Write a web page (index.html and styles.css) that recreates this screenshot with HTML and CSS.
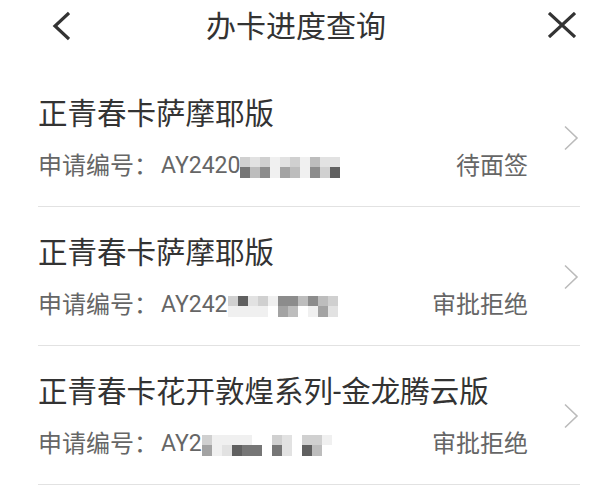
FILE: index.html
```html
<!DOCTYPE html>
<html>

<head>
  <meta charset="utf-8" />
  <title>办卡进度查询</title>
  <link rel="stylesheet" href="styles.css">
</head>

<body>
  <div class="header">
    <svg class="back" width="18" height="30" viewBox="0 0 18 30">
      <path d="M17 2 L3 15 L17 28" />
    </svg>
    <h1 class="title">办卡进度查询</h1>
    <svg class="close" width="28" height="26" viewBox="0 0 28 26">
      <path d="M1 1 L27 25 M27 1 L1 25" />
    </svg>
  </div>

  <div class="list">
    <div class="row">
      <div class="info">
        <p class="card-name">正青春卡萨摩耶版</p>
        <div class="sub">
          <div class="apply-no">
            <span>申请编号：</span><span class="latin">AY2420</span>
            <div class="mosaic">
              <i class="s3"></i><i class="s7"></i>
              <i class="s2"></i><i class="s4"></i>
              <i class="s3"></i><i class="s6"></i>
              <i class="s1"></i><i class="s1"></i>
              <i class="s2"></i><i class="s5"></i>
              <i class="s3"></i><i class="s4"></i>
              <i class="s1"></i><i class="s1"></i>
              <i class="s4"></i><i class="s6"></i>
              <i class="s2"></i><i class="s3"></i>
              <i class="s2"></i><i class="s8"></i>
            </div>
          </div>
          <span class="status">待面签</span>
        </div>
      </div>
      <svg class="arrow" width="16" height="26" viewBox="0 0 16 26">
        <path d="M2 1.5 L14 13 L2 24.5" />
      </svg>
    </div>

    <div class="row">
      <div class="info">
        <p class="card-name">正青春卡萨摩耶版</p>
        <div class="sub">
          <div class="apply-no">
            <span>申请编号：</span><span class="latin">AY242</span>
            <div class="mosaic">
              <i class="s3"></i><i class="s1"></i>
              <i class="s8"></i><i class="s1"></i>
              <i class="s2"></i><i class="s1"></i>
              <i class="s3"></i><i class="s1"></i>
              <i class="s1"></i><i class="s0"></i>
              <i class="s6"></i><i class="s5"></i>
              <i class="s6"></i><i class="s4"></i>
              <i class="s4"></i><i class="s0"></i>
              <i class="s6"></i><i class="s1"></i>
              <i class="s4"></i><i class="s5"></i>
              <i class="s3"></i><i class="s2"></i>
            </div>
          </div>
          <span class="status">审批拒绝</span>
        </div>
      </div>
      <svg class="arrow" width="16" height="26" viewBox="0 0 16 26">
        <path d="M2 1.5 L14 13 L2 24.5" />
      </svg>
    </div>

    <div class="row">
      <div class="info">
        <p class="card-name">正青春卡花开敦煌系列-金龙腾云版</p>
        <div class="sub">
          <div class="apply-no">
            <span>申请编号：</span><span class="latin">AY2</span>
            <div class="mosaic">
              <i class="s3"></i><i class="s5"></i>
              <i class="s1"></i><i class="s1"></i>
              <i class="s1"></i><i class="s2"></i>
              <i class="s1"></i><i class="s8"></i>
              <i class="s1"></i><i class="s7"></i>
              <i class="s0"></i><i class="s7"></i>
              <i class="s0"></i><i class="s0"></i>
              <i class="s3"></i><i class="s7"></i>
              <i class="s2"></i><i class="s2"></i>
              <i class="s0"></i><i class="s0"></i>
              <i class="s3"></i><i class="s8"></i>
              <i class="s3"></i><i class="s4"></i>
              <i class="s1"></i><i class="s0"></i>
            </div>
          </div>
          <span class="status">审批拒绝</span>
        </div>
      </div>
      <svg class="arrow" width="16" height="26" viewBox="0 0 16 26">
        <path d="M2 1.5 L14 13 L2 24.5" />
      </svg>
    </div>
  </div>
</body>

</html>
```

FILE: styles.css
```css
* {
  margin: 0;
  padding: 0;
  box-sizing: border-box;
  font-family: Roboto, "Noto Sans CJK SC", sans-serif;
}

html,
body {
  width: 100%;
  height: 100%;
  overflow: hidden;
  background-color: #fff;
}

.header {
  height: 68px;
  display: flex;
  align-items: flex-start;
  padding: 11px 40px 0 52px;
}

.header svg path {
  fill: none;
  stroke: #333;
  stroke-width: 3.2;
}

.back {
  flex: 0 0 auto;
}

.close {
  flex: 0 0 auto;
  margin-top: 1px;
}

.title {
  flex: 1;
  text-align: center;
  padding-right: 26px;
  font-size: 30px;
  font-weight: normal;
  line-height: 32px;
  color: #333;
}

.list {
  margin: 0 36px 0 38px;
}

.row {
  display: flex;
  align-items: center;
  border-bottom: 1px solid #e2e2e2;
  padding: 26px 0 24px 0;
}

.info {
  width: 490px;
}

.card-name {
  font-size: 29.5px;
  line-height: 40px;
  color: #333;
}

.sub {
  display: flex;
  justify-content: space-between;
  margin-top: 16px;
  font-size: 24px;
  line-height: 32px;
  color: #666;
}

.apply-no {
  display: flex;
  align-items: center;
}

.latin {
  font-size: 23px;
  margin-left: 3px;
}

.mosaic {
  display: grid;
  grid-auto-flow: column;
  grid-template-rows: 10px 11px;
  grid-auto-columns: 10px;
  margin-top: 3px;
}

.s0 { background-color: #fff; }
.s1 { background-color: #f0f0f0; }
.s2 { background-color: #e2e2e2; }
.s3 { background-color: #d0d0d0; }
.s4 { background-color: #bdbdbd; }
.s5 { background-color: #a3a3a3; }
.s6 { background-color: #8c8c8c; }
.s7 { background-color: #767676; }
.s8 { background-color: #606060; }

.arrow {
  flex: 0 0 auto;
  margin: 0 1px 0 35px;
}

.arrow path {
  fill: none;
  stroke: #bbb;
  stroke-width: 1.6;
}
```
